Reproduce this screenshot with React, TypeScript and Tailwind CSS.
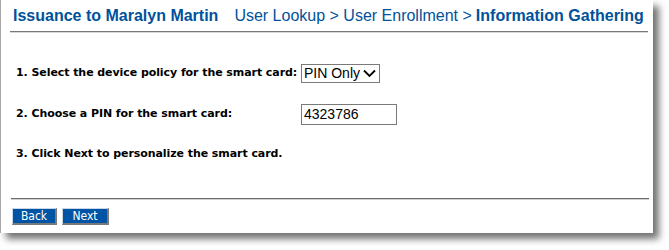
import React from "react";

export default function App() {
  return (
    <div className="w-[669px] h-[250px] bg-white overflow-hidden">
      <div className="w-[653px] h-[233px] bg-white border-l border-[#a8a8a8] shadow-[6px_6px_7px_rgba(0,0,0,0.55)] flex flex-col">
        <div
          className="flex items-baseline pl-[12px] pt-[4px] h-[31px] text-[16px] text-[#00529b] whitespace-nowrap"
          style={{ fontFamily: '"Liberation Sans", Arial, sans-serif' }}
        >
          <span className="font-bold">Issuance to Maralyn Martin</span>
          <span className="ml-[16px]">User Lookup &gt; User Enrollment &gt; </span>
          <span className="font-bold ml-[4px]">Information Gathering</span>
        </div>
        <div className="ml-[9px] mr-[5px] h-[2px] border-t border-[#7a7a7a] border-b border-b-[#d8d8d8]" />
        <div
          className="pl-[15px] text-[11px] font-bold text-black flex flex-col tracking-[-0.07px]"
          style={{ fontFamily: '"DejaVu Sans", Verdana, sans-serif' }}
        >
          <div className="flex items-center h-[20px] mt-[30px]">
            <span className="w-[285px]">1. Select the device policy for the smart card:</span>
            <div
              className="w-[79px] h-[19px] border border-[#7a7a7a] flex items-center justify-between pl-[2px] pr-[3px] font-normal text-[14px] tracking-normal"
              style={{ fontFamily: '"Liberation Sans", Arial, sans-serif' }}
            >
              <span>PIN Only</span>
              <svg width="13" height="9" viewBox="0 0 13 9">
                <path d="M1 1.5 L6.5 7 L12 1.5" fill="none" stroke="#000" strokeWidth="1.8" />
              </svg>
            </div>
          </div>
          <div className="flex items-center h-[22px] mt-[20px]">
            <span className="w-[285px]">2. Choose a PIN for the smart card:</span>
            <div
              className="w-[96px] h-[21px] border border-[#7a7a7a] flex items-center pl-[2px] font-normal text-[14px] tracking-normal"
              style={{ fontFamily: '"Liberation Sans", Arial, sans-serif' }}
            >
              4323786
            </div>
          </div>
          <div className="flex items-center h-[20px] mt-[19px]">
            <span>3. Click Next to personalize the smart card.</span>
          </div>
        </div>
        <div className="mt-auto ml-[10px] mr-[4px] h-[2px] border-t border-[#6e6e6e] border-b border-b-[#d0d0d0]" />
        <div
          className="flex gap-[5px] pl-[11px] pt-[8px] pb-[8px]"
          style={{ fontFamily: '"DejaVu Sans Condensed", Tahoma, sans-serif' }}
        >
          <div className="w-[45px] h-[17px] bg-[#0054a6] text-white text-[12px] flex items-center justify-center border border-t-[#c8d8e8] border-l-[#c8d8e8] border-r-[#7a7a7a] border-b-[#7a7a7a] border-r-2 border-b-2">
            Back
          </div>
          <div className="w-[47px] h-[17px] bg-[#0054a6] text-white text-[12px] flex items-center justify-center border border-t-[#c8d8e8] border-l-[#c8d8e8] border-r-[#7a7a7a] border-b-[#7a7a7a] border-r-2 border-b-2">
            Next
          </div>
        </div>
      </div>
    </div>
  );
}
